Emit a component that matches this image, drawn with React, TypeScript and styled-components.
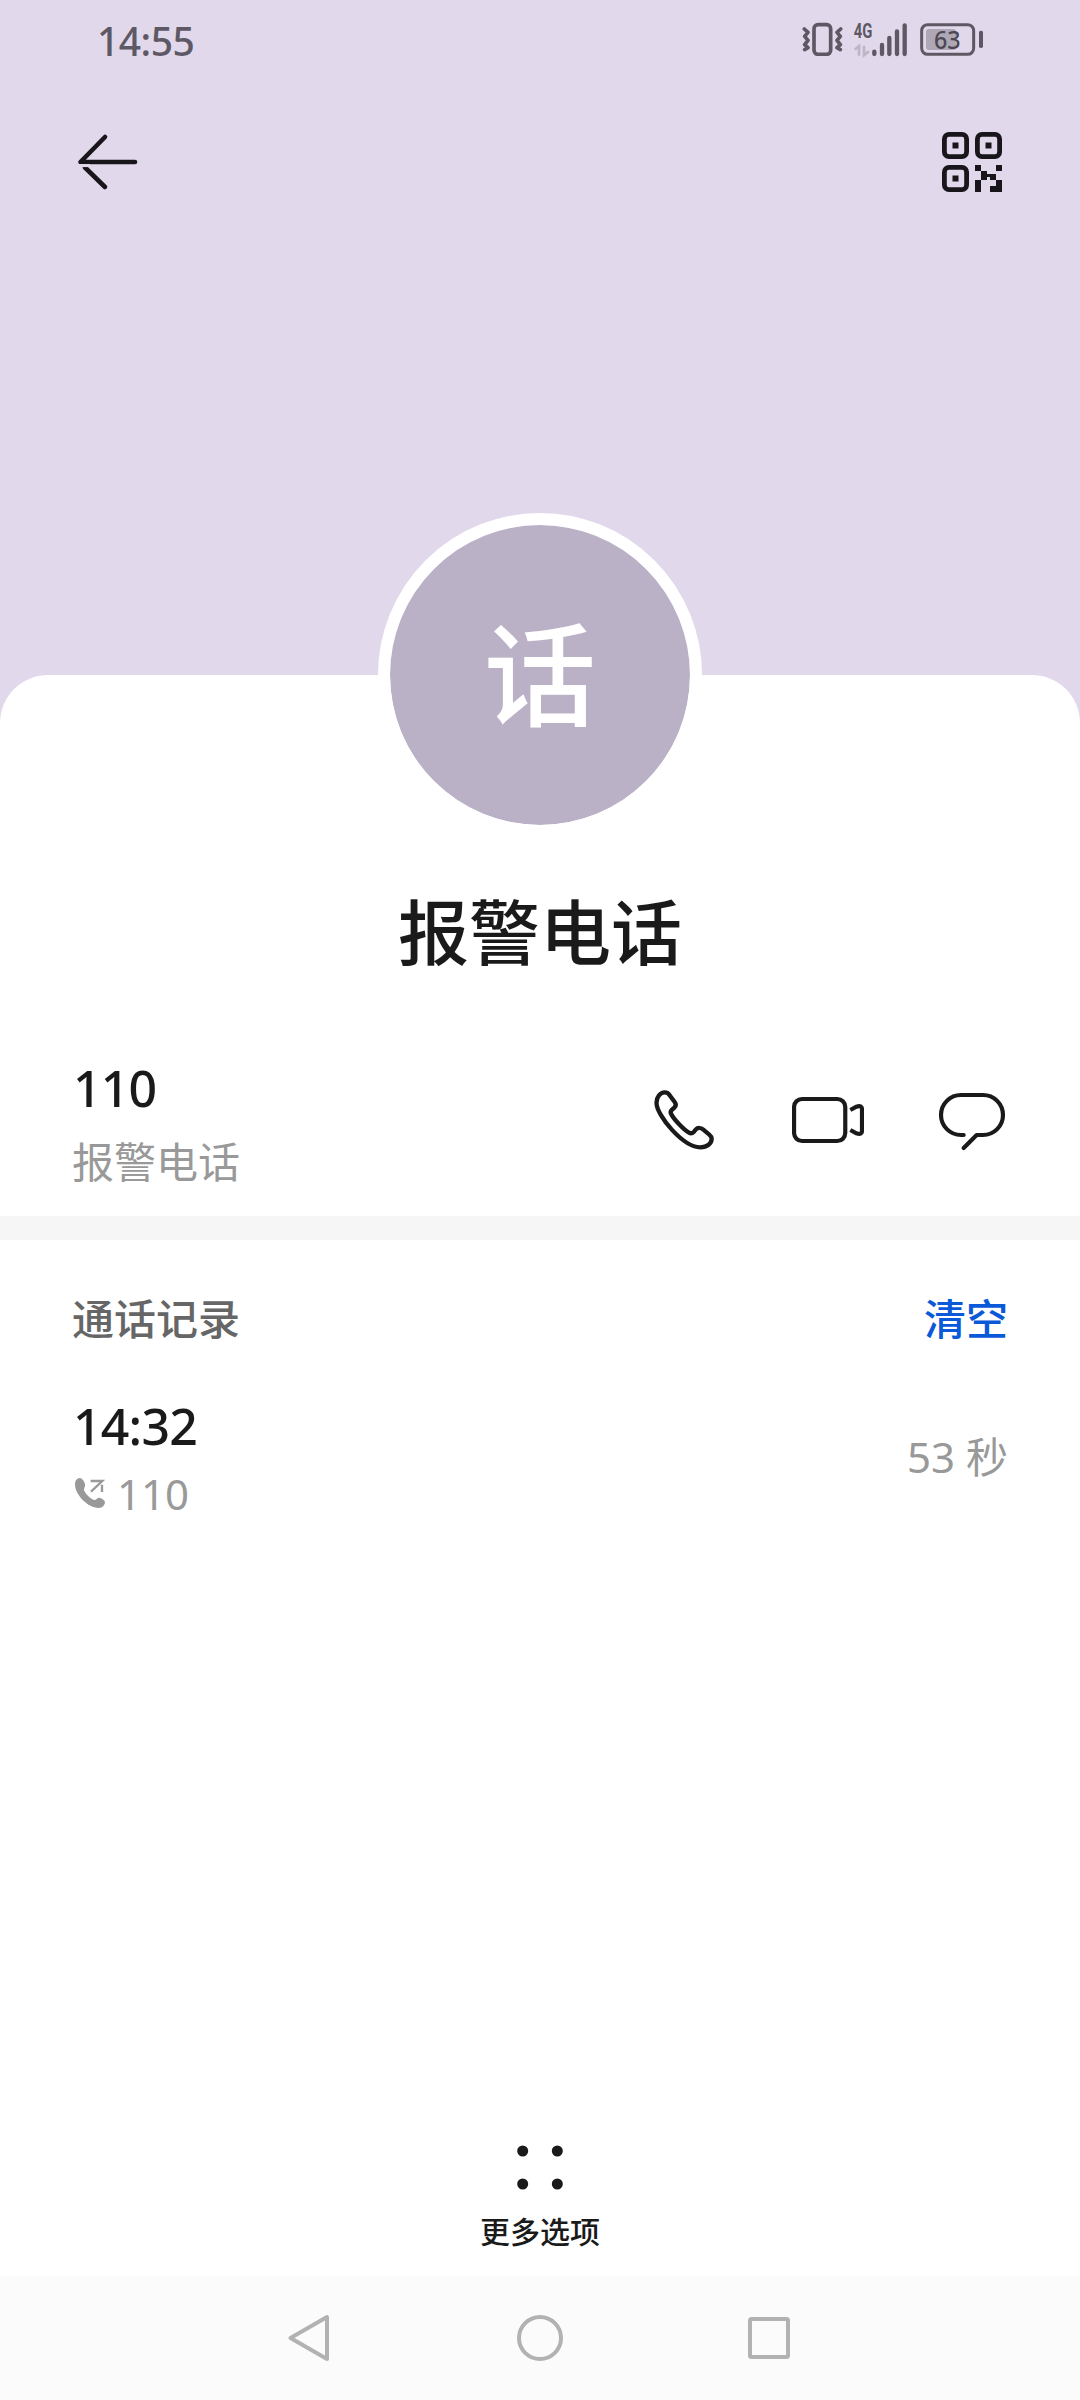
import React from 'react';
import styled, { createGlobalStyle } from 'styled-components';

const GlobalStyle = createGlobalStyle`
  *, *::before, *::after { box-sizing: border-box; }
  body {
    margin: 0;
    background: #fff;
    font-family: 'Noto Sans', 'Noto Sans CJK SC', sans-serif;
    color: #1a1a1a;
  }
  svg { display: block; flex: none; }
`;

const Screen = styled.div`
  width: 1080px;
  height: 2400px;
  display: flex;
  flex-direction: column;
  overflow: hidden;
  background: #e1d9eb;
`;

const StatusBar = styled.header`
  height: 78px;
  flex: none;
  display: flex;
  align-items: center;
  justify-content: space-between;
  padding: 0 96px 0 97px;
`;

const Clock = styled.span`
  font-size: 39px;
  font-weight: 500;
  line-height: 44px;
  letter-spacing: -0.5px;
  color: #5d5864;
  padding-top: 4px;
`;

const StatusIcons = styled.div`
  display: flex;
  align-items: center;
`;

const Spacer = styled.span<{ $w: number }>`
  width: ${(p) => p.$w}px;
`;

const Toolbar = styled.nav`
  height: 168px;
  flex: none;
  display: flex;
  align-items: center;
  justify-content: space-between;
  padding: 0 78px;
`;

const IconButton = styled.button`
  border: 0;
  padding: 0;
  background: none;
  color: inherit;
  cursor: pointer;
`;

const Sheet = styled.main`
  flex: 1;
  margin-top: 429px;
  background: #fff;
  border-radius: 48px 48px 0 0;
  display: flex;
  flex-direction: column;
`;

const Avatar = styled.div`
  width: 324px;
  height: 324px;
  margin: -162px auto 0;
  flex: none;
  border: 12px solid #fff;
  border-radius: 50%;
  background: #bab1c7;
  background-clip: padding-box;
  display: flex;
  align-items: center;
  justify-content: center;
  color: #fff;
  font-size: 112px;
  font-weight: 500;
  line-height: 150px;
`;

const Name = styled.h1`
  margin: 44px 0 0;
  padding-top: 1px;
  font-size: 71px;
  font-weight: 500;
  line-height: 100px;
  text-align: center;
`;

const ContactRow = styled.section`
  height: 234px;
  padding: 76px 72px 0;
  display: flex;
  align-items: flex-start;
  justify-content: space-between;
`;

const Actions = styled.div`
  display: flex;
  gap: 72px;
  padding-top: 26px;
`;

const Stack = styled.div<{ $gap: number }>`
  display: flex;
  flex-direction: column;
  gap: ${(p) => p.$gap}px;
`;

const Primary = styled.div`
  padding-left: 1px;
  font-size: 50px;
  font-weight: 500;
  line-height: 60px;
  letter-spacing: -0.8px;
`;

const Secondary = styled.div<{ $indent?: number }>`
  display: flex;
  align-items: center;
  gap: 12px;
  padding-left: ${(p) => p.$indent ?? 0}px;
  font-size: 42px;
  line-height: 48px;
  color: #999;
`;

const Divider = styled.div`
  height: 24px;
  background: #f6f6f6;
`;

const SectionHead = styled.div`
  display: flex;
  justify-content: space-between;
  padding: 49px 72px 0;
  font-size: 42px;
  font-weight: 500;
  line-height: 60px;
  color: #666;
`;

const ClearButton = styled(IconButton)`
  font: inherit;
  color: #0a59d8;
`;

const Record = styled.section`
  display: flex;
  align-items: center;
  justify-content: space-between;
  padding: 47px 72px 0;
`;

const More = styled(IconButton)`
  margin: auto auto 0;
  padding-bottom: 22px;
  display: flex;
  flex-direction: column;
  align-items: center;
  gap: 18px;
  font-family: inherit;
  font-size: 30px;
  font-weight: 500;
  line-height: 44px;
`;

const SystemNav = styled.footer`
  height: 124px;
  flex: none;
  display: flex;
  align-items: center;
  justify-content: center;
  gap: 181px;
  background: #fbfbfb;
`;

const VibrateIcon = () => (
  <svg width="41" height="34" viewBox="66 66 123 102" fill="none" stroke="#5d5864">
    <rect x="102" y="74" width="50" height="89" rx="12" strokeWidth="11" />
    <path d="M73 87 L84 97 L74 109 L84 121 L74 134 L84 143 L74 149" strokeWidth="11" strokeLinecap="round" strokeLinejoin="round" />
    <path d="M182 87 L171 97 L181 109 L171 121 L181 134 L171 143 L181 149" strokeWidth="11" strokeLinecap="round" strokeLinejoin="round" />
  </svg>
);

const SignalIcon = () => (
  <svg width="55" height="55" viewBox="219 33 165 165" fill="none">
    <text x="221" y="111" fontFamily="Roboto, sans-serif" fontWeight="700" fontSize="63" fill="#5d5864" textLength="56" lengthAdjust="spacingAndGlyphs">4G</text>
    <path d="M224 146 L237 135 V164 M252 134 V163 L267 151" stroke="#bdb6c6" strokeWidth="8" />
    <g stroke="#5d5864" strokeWidth="13" strokeLinecap="round">
      <path d="M283 152 V159 M306 132 V159 M328 111 V159 M351 91 V159 M374 73 V159" />
    </g>
  </svg>
);

const BatteryIcon = () => (
  <svg width="64" height="34" viewBox="420 66 192 102" fill="none">
    <rect x="438" y="87" width="90" height="63" rx="8" fill="#aea8b6" />
    <rect x="425" y="74" width="156" height="89" rx="18" stroke="#5d5864" strokeWidth="9" />
    <rect x="597" y="92" width="12" height="52" rx="5" fill="#5d5864" />
    <text x="502" y="146" textAnchor="middle" fontFamily="'Noto Sans', sans-serif" fontWeight="500" fontSize="74" textLength="80" lengthAdjust="spacingAndGlyphs" fill="#4c4753">63</text>
  </svg>
);

const BackArrowIcon = () => (
  <svg width="60" height="60" viewBox="0 0 60 60" fill="none" stroke="#18161b" strokeWidth="4.6" strokeLinecap="round">
    <path d="M57 30 H2.500 L27 5" strokeLinejoin="round" />
    <path d="M27 55 L7 35.500" />
    <path d="M0 33.6 H12" stroke="#e1d9eb" strokeWidth="3" strokeLinecap="butt" />
  </svg>
);

const QrIcon = () => (
  <svg width="60" height="60" viewBox="0 0 60 60" fill="#18161b">
    {[[0, 0], [33, 0], [0, 33]].map(([x, y]) => (
      <g key={`${x}-${y}`}>
        <rect x={x + 2.4} y={y + 2.4} width="22.2" height="22.2" rx="4.6" fill="none" stroke="#18161b" strokeWidth="4.8" />
        <rect x={x + 10.5} y={y + 10.5} width="6" height="6" />
      </g>
    ))}
    <path d="M33 33h6v6h6v9h-6v-9h-6z M54 33h6v6h-6z M48 42h6v6h-6z M45 42h3v3h-3z M33 48h6v12h-6z M54 48h6v12h-12v-6h6z" />
  </svg>
);

const PhoneIcon = () => (
  <svg width="72" height="72" viewBox="54 72 216 216" fill="none" stroke="#1a1a1a" strokeWidth="13" strokeLinejoin="round">
    <path d="M104 97 C91 97 79.500 111 79.500 128 C79.500 167 160 262 211 262 C232 262 245 250 245 236 C245 230 242 227 237 223 L220 209 C213 203 203 202 197 209 L192 215 C187 220 182 221 177 218 C160 208 133 179 124 163 C121 158 121 154 125 150 L133 143 C138 138 138 131 134 126 L120 107 C116 100 111 97 104 97 Z" />
  </svg>
);

const VideoIcon = () => (
  <svg width="72" height="72" viewBox="486 72 216 216" fill="none" stroke="#1a1a1a" strokeWidth="12.500">
    <rect x="492.200" y="117" width="153.600" height="126" rx="24" />
    <path d="M661 150 L679 140 Q696 134 696 148 V212 Q696 226 679 220 L661 210" />
  </svg>
);

const MessageIcon = () => (
  <svg width="72" height="72" viewBox="918 72 216 216" fill="none" stroke="#1a1a1a" strokeWidth="12.500" strokeLinecap="round" strokeLinejoin="round">
    <path d="M1001 225 H993 A60 60 0 0 1 993 105 H1059 A60 60 0 0 1 1059 225 H1040 L1001 264" />
  </svg>
);

const OutgoingIcon = () => (
  <svg width="30" height="32" viewBox="75 588 90 96" fill="#999">
    <path d="M90 588 C80 588 75 598 75 607 C75 640 115 678 146 678 C158 678 165 668 165 660 C163 654 155 648 148 647 C141 647 138 655 132 654 C120 650 106 635 102 625 C101 619 107 613 105 605 C102 598 96 588 90 588Z" />
    <path d="M122 597 H157 L123 629 M156 608 V630" fill="none" stroke="#999" strokeWidth="7" />
  </svg>
);

const MoreIcon = () => (
  <svg width="48" height="48" viewBox="0 0 48 48" fill="#1a1a1a">
    <circle cx="6.700" cy="7" r="5.500" />
    <circle cx="41.300" cy="7" r="5.500" />
    <circle cx="6.700" cy="40" r="5.500" />
    <circle cx="41.300" cy="40" r="5.500" />
  </svg>
);

const NavIcon = ({ children }: { children: React.ReactNode }) => (
  <svg width="48" height="48" viewBox="0 0 48 48" fill="none" stroke="#b2b2b2" strokeWidth="4" strokeLinejoin="round">
    {children}
  </svg>
);

export default function App() {
  return (
    <>
      <GlobalStyle />
      <Screen>
        <StatusBar>
          <Clock>14:55</Clock>
          <StatusIcons>
            <VibrateIcon />
            <Spacer $w={10} />
            <SignalIcon />
            <Spacer $w={12} />
            <BatteryIcon />
          </StatusIcons>
        </StatusBar>
        <Toolbar>
          <IconButton><BackArrowIcon /></IconButton>
          <IconButton><QrIcon /></IconButton>
        </Toolbar>
        <Sheet>
          <Avatar>话</Avatar>
          <Name>报警电话</Name>
          <ContactRow>
            <Stack $gap={20}>
              <Primary>110</Primary>
              <Secondary>报警电话</Secondary>
            </Stack>
            <Actions>
              <IconButton><PhoneIcon /></IconButton>
              <IconButton><VideoIcon /></IconButton>
              <IconButton><MessageIcon /></IconButton>
            </Actions>
          </ContactRow>
          <Divider />
          <SectionHead>
            <span>通话记录</span>
            <ClearButton>清空</ClearButton>
          </SectionHead>
          <Record>
            <Stack $gap={14}>
              <Primary>14:32</Primary>
              <Secondary $indent={3}>
                <OutgoingIcon />
                <span>110</span>
              </Secondary>
            </Stack>
            <Secondary>53 秒</Secondary>
          </Record>
          <More>
            <MoreIcon />
            <span>更多选项</span>
          </More>
        </Sheet>
        <SystemNav>
          <NavIcon><path d="M40 3 V45 L3.500 24 Z" /></NavIcon>
          <NavIcon><circle cx="24" cy="24" r="21" /></NavIcon>
          <NavIcon><rect x="5" y="5" width="38" height="38" rx="1.500" /></NavIcon>
        </SystemNav>
      </Screen>
    </>
  );
}
